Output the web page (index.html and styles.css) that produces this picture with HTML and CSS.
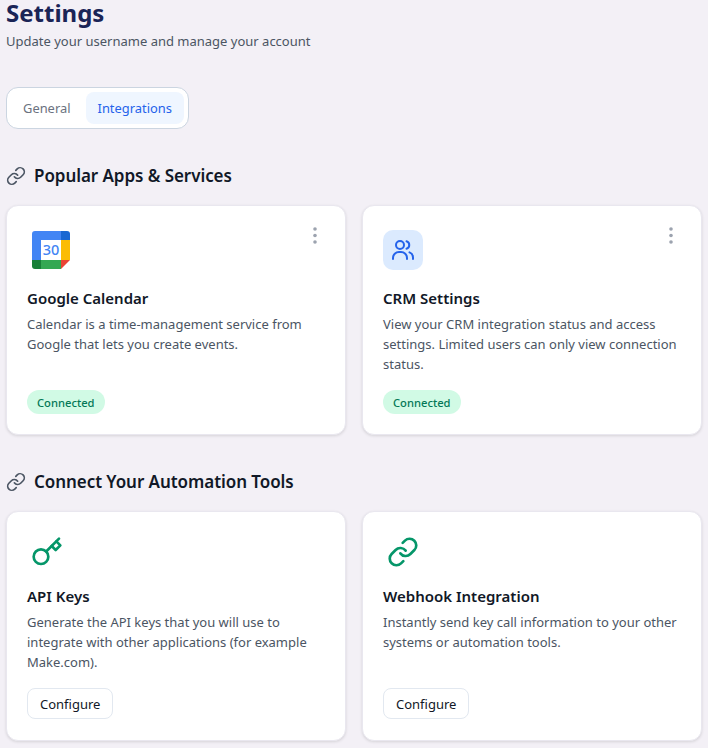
FILE: index.html
```html
<!DOCTYPE html>
<html lang="en">
<head>
  <meta charset="UTF-8">
  <meta name="viewport" content="width=device-width, initial-scale=1.0">
  <title>Settings</title>
  <link rel="stylesheet" href="styles.css">
</head>
<body>
  <div class="page">
    <h1 class="page-title">Settings</h1>
    <p class="page-subtitle">Update your username and manage your account</p>

    <div class="tabs">
      <button class="tab">General</button>
      <button class="tab tab-active">Integrations</button>
    </div>

    <h2 class="section-title">
      <svg class="section-icon" viewBox="0 0 24 24" fill="none" stroke="currentColor" stroke-width="2" stroke-linecap="round" stroke-linejoin="round">
        <path d="M10 13a5 5 0 0 0 7.54.54l3-3a5 5 0 0 0-7.07-7.07l-1.72 1.71"/>
        <path d="M14 11a5 5 0 0 0-7.54-.54l-3 3a5 5 0 0 0 7.07 7.07l1.71-1.71"/>
      </svg>
      Popular Apps &amp; Services
    </h2>

    <div class="card-grid">
      <div class="card">
        <button class="card-menu">
          <svg viewBox="0 0 16 18" fill="currentColor"><circle cx="8" cy="3" r="1.8"/><circle cx="8" cy="9.5" r="1.8"/><circle cx="8" cy="16" r="1.8"/></svg>
        </button>
        <div class="card-icon">
          <svg class="gcal" viewBox="0 0 38 38">
            <path d="M3 0h26v9H9v20H0V3a3 3 0 0 1 3-3z" fill="#4285f4"/>
            <path d="M29 0h6a3 3 0 0 1 3 3v6h-9z" fill="#1967d2"/>
            <rect x="29" y="9" width="9" height="20" fill="#fbbc04"/>
            <rect x="9" y="29" width="20" height="9" fill="#34a853"/>
            <path d="M0 29h9v9H3a3 3 0 0 1-3-3z" fill="#188038"/>
            <path d="M29 29h9l-9 9z" fill="#ea4335"/>
            <rect x="9" y="9" width="20" height="20" fill="#fff"/>
            <text class="gcal-day" x="19" y="24" text-anchor="middle">30</text>
          </svg>
        </div>
        <h3 class="card-title">Google Calendar</h3>
        <p class="card-text">Calendar is a time-management service from Google that lets you create events.</p>
        <div class="card-footer"><span class="badge">Connected</span></div>
      </div>

      <div class="card">
        <button class="card-menu">
          <svg viewBox="0 0 16 18" fill="currentColor"><circle cx="8" cy="3" r="1.8"/><circle cx="8" cy="9.5" r="1.8"/><circle cx="8" cy="16" r="1.8"/></svg>
        </button>
        <div class="card-icon card-icon-blue">
          <svg class="users" viewBox="0 0 24 24" fill="none" stroke="currentColor" stroke-width="2" stroke-linecap="round" stroke-linejoin="round">
            <circle cx="9" cy="7" r="4"/>
            <path d="M2 21v-1a6 6 0 0 1 6-6h2a6 6 0 0 1 6 6v1"/>
            <path d="M15.5 3.2a4 4 0 0 1 0 7.6"/>
            <path d="M18.5 14.4a5.5 5.5 0 0 1 3.5 5.1V21"/>
          </svg>
        </div>
        <h3 class="card-title">CRM Settings</h3>
        <p class="card-text">View your CRM integration status and access settings. Limited users can only view connection status.</p>
        <div class="card-footer"><span class="badge">Connected</span></div>
      </div>
    </div>

    <h2 class="section-title">
      <svg class="section-icon" viewBox="0 0 24 24" fill="none" stroke="currentColor" stroke-width="2" stroke-linecap="round" stroke-linejoin="round">
        <path d="M10 13a5 5 0 0 0 7.54.54l3-3a5 5 0 0 0-7.07-7.07l-1.72 1.71"/>
        <path d="M14 11a5 5 0 0 0-7.54-.54l-3 3a5 5 0 0 0 7.07 7.07l1.71-1.71"/>
      </svg>
      Connect Your Automation Tools
    </h2>

    <div class="card-grid">
      <div class="card">
        <div class="tool-icon">
          <svg viewBox="0 0 24 24" fill="none" stroke="currentColor" stroke-width="2" stroke-linecap="round" stroke-linejoin="round">
            <circle cx="7.5" cy="15.5" r="5.5"/>
            <path d="m21 2-9.6 9.6"/>
            <path d="m15.5 7.5 3 3L22 7l-3-3"/>
          </svg>
        </div>
        <h3 class="card-title">API Keys</h3>
        <p class="card-text">Generate the API keys that you will use to integrate with other applications (for example Make.com).</p>
        <div class="card-footer"><button class="btn">Configure</button></div>
      </div>

      <div class="card">
        <div class="tool-icon">
          <svg viewBox="0 0 24 24" fill="none" stroke="currentColor" stroke-width="2" stroke-linecap="round" stroke-linejoin="round">
            <path d="M10 13a5 5 0 0 0 7.54.54l3-3a5 5 0 0 0-7.07-7.07l-1.72 1.71"/>
            <path d="M14 11a5 5 0 0 0-7.54-.54l-3 3a5 5 0 0 0 7.07 7.07l1.71-1.71"/>
          </svg>
        </div>
        <h3 class="card-title">Webhook Integration</h3>
        <p class="card-text">Instantly send key call information to your other systems or automation tools.</p>
        <div class="card-footer"><button class="btn">Configure</button></div>
      </div>
    </div>
  </div>
</body>
</html>
```

FILE: styles.css
```css
* {
  box-sizing: border-box;
}

body {
  margin: 0;
  background: #f3f0f6;
  font-family: "Noto Sans", sans-serif;
  color: #111827;
}

.page {
  padding: 0 6px 7px;
}

.page-title {
  margin: 0;
  font-size: 24px;
  line-height: 26px;
  font-weight: 700;
  color: #1a2456;
}

.page-subtitle {
  margin: 5px 0 0;
  font-size: 13px;
  line-height: 20px;
  color: #4b5563;
}

.tabs {
  display: inline-flex;
  gap: 3px;
  margin-top: 36px;
  padding: 4px;
  background: #fff;
  border: 1px solid #cbd5e1;
  border-radius: 12px;
  vertical-align: top;
}

.tab {
  height: 32px;
  padding: 0 12px;
  background: transparent;
  border: none;
  border-radius: 8px;
  font-family: inherit;
  font-size: 12.9px;
  color: #6b7280;
}

.tab-active {
  background: #eff6ff;
  color: #2563eb;
}

.section-title {
  display: flex;
  align-items: center;
  gap: 8px;
  margin: 33px 0 15px;
  font-size: 17px;
  line-height: 28px;
  font-weight: 600;
  letter-spacing: -0.06px;
}

.section-icon {
  width: 20px;
  height: 20px;
  color: #4b5563;
}

.card-grid {
  display: grid;
  grid-template-columns: 340px 340px;
  gap: 16px;
}

.card {
  position: relative;
  display: flex;
  flex-direction: column;
  height: 230px;
  padding: 24px 20px 20px;
  background: #fff;
  border: 1px solid #e9e7ef;
  border-radius: 12px;
  box-shadow: 0 1px 3px rgba(0, 0, 0, 0.12);
}

.card-menu {
  position: absolute;
  top: 20px;
  right: 22px;
  width: 16px;
  height: 18px;
  padding: 0;
  background: transparent;
  border: none;
  color: #9ca3af;
}

.card-icon {
  display: flex;
  align-items: center;
  width: 40px;
  height: 40px;
  margin-bottom: 16px;
  border-radius: 10px;
}

.card-icon-blue {
  justify-content: center;
  background: #dbeafe;
  color: #2563eb;
}

.gcal {
  width: 38px;
  height: 38px;
  margin-left: 5px;
  flex: none;
}

.gcal-day {
  font-family: "Noto Sans", sans-serif;
  font-size: 14.5px;
  font-weight: 500;
  fill: #4285f4;
}

.users {
  width: 24px;
  height: 24px;
}

.tool-icon {
  display: flex;
  justify-content: center;
  width: 40px;
  height: 32px;
  margin-bottom: 16px;
  color: #059669;
}

.tool-icon svg {
  width: 32px;
  height: 32px;
}

.card-title {
  margin: 0 0 4px;
  font-size: 15px;
  line-height: 24px;
  font-weight: 600;
}

.card-text {
  margin: 0;
  font-size: 13px;
  line-height: 20px;
  color: #4b5563;
}

.card-footer {
  margin-top: auto;
  display: flex;
}

.badge {
  display: inline-block;
  padding: 0 10px;
  height: 24px;
  line-height: 25px;
  background: #d1fae5;
  border-radius: 12px;
  font-size: 11.2px;
  font-weight: 500;
  color: #047857;
}

.btn {
  height: 31px;
  margin-bottom: 1px;
  padding: 0 12px;
  background: #fff;
  border: 1px solid #e2e8f0;
  border-radius: 8px;
  font-family: inherit;
  font-size: 13px;
  color: #111827;
}
```
